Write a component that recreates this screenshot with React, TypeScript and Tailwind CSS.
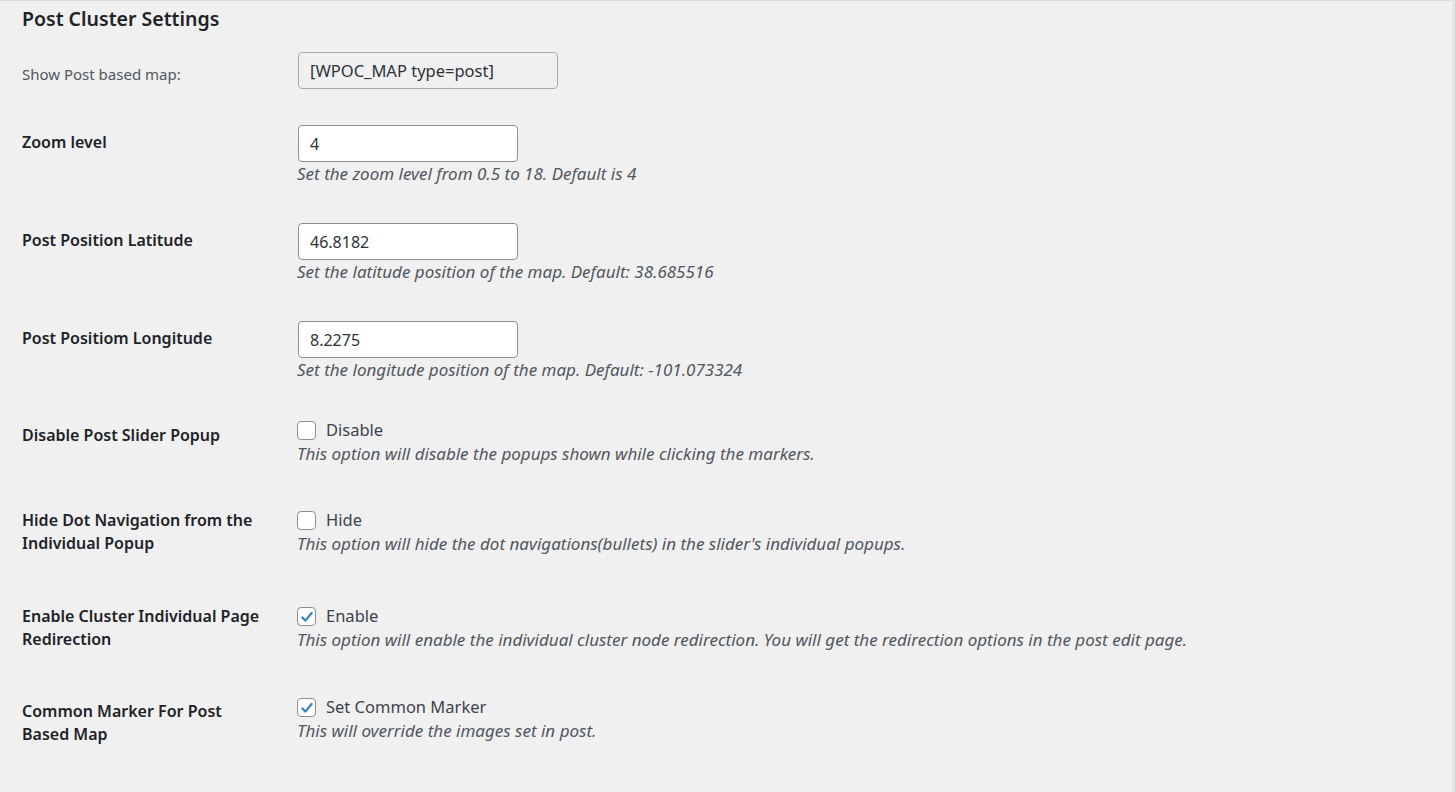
import React, { useState } from "react";

const font = "font-['Noto_Sans',sans-serif]";

interface CheckProps {
  checked: boolean;
  onToggle: () => void;
  label: string;
}

const Check: React.FC<CheckProps> = ({ checked, onToggle, label }) => (
  <label className="flex items-center h-[23px] cursor-pointer">
    <span
      onClick={onToggle}
      className="w-[19px] h-[19px] border border-[#8c8f94] rounded-[4px] bg-white flex items-center justify-center"
    >
      {checked && (
        <svg viewBox="0 0 20 20" className="w-[16px] h-[16px]">
          <path
            d="M4.2 10.6l3.7 3.9L15.8 5"
            fill="none"
            stroke="#3582c4"
            strokeWidth={2.8}
            strokeLinecap="round"
            strokeLinejoin="round"
          />
        </svg>
      )}
    </span>
    <span className="ml-[10px] text-[16.5px] text-[#3c434a]">{label}</span>
  </label>
);

const App: React.FC = () => {
  const [zoom, setZoom] = useState("4");
  const [lat, setLat] = useState("46.8182");
  const [lng, setLng] = useState("8.2275");
  const [disablePopup, setDisablePopup] = useState(false);
  const [hideDots, setHideDots] = useState(false);
  const [redirect, setRedirect] = useState(true);
  const [commonMarker, setCommonMarker] = useState(true);

  const inputCls =
    "w-[220px] h-[37px] px-[11px] bg-white border border-[#8c8f94] rounded-[4px] text-[16px] text-[#2c3338] outline-none";
  const labelCls = "w-[275px] shrink-0 text-[16px] leading-[23px] font-semibold text-[#1d2327]";
  const descCls = "text-[17px] leading-[23px] italic text-[#50575e]";

  return (
    <div className={`min-h-screen bg-[#f0f0f1] border-t border-[#dcdcde] border-r-[3px] border-r-[#e6e6e8] pl-[22px] ${font}`}>
      <h2 className="pt-[4px] h-[51px] text-[19.5px] leading-[28px] font-semibold text-[#1d2327]">
        Post Cluster Settings
      </h2>

      <div className="flex h-[73px]">
        <div className="w-[276px] shrink-0 pt-[11px] text-[15px] leading-[22px] text-[#50575e]">
          Show Post based map:
        </div>
        <input
          readOnly
          value="[WPOC_MAP type=post]"
          className="w-[260px] h-[37px] px-[11px] bg-[#f0f0f1] border border-[#a7aaad] rounded-[4px] text-[16.5px] text-[#2c3338] outline-none"
        />
      </div>

      <div className="flex h-[98px]">
        <div className={`${labelCls} pt-[6px]`}>Zoom level</div>
        <div className="flex flex-col">
          <input value={zoom} onChange={(e) => setZoom(e.target.value)} className={`${inputCls} ml-px`} />
          <p className={descCls}>Set the zoom level from 0.5 to 18. Default is 4</p>
        </div>
      </div>

      <div className="flex h-[98px]">
        <div className={`${labelCls} pt-[6px]`}>Post Position Latitude</div>
        <div className="flex flex-col">
          <input value={lat} onChange={(e) => setLat(e.target.value)} className={`${inputCls} ml-px`} />
          <p className={descCls}>Set the latitude position of the map. Default: 38.685516</p>
        </div>
      </div>

      <div className="flex h-[98px]">
        <div className={`${labelCls} pt-[6px]`}>Post Positiom Longitude</div>
        <div className="flex flex-col">
          <input value={lng} onChange={(e) => setLng(e.target.value)} className={`${inputCls} ml-px`} />
          <p className={descCls}>Set the longitude position of the map. Default: -101.073324</p>
        </div>
      </div>

      <div className="flex h-[90px]">
        <div className={`${labelCls} pt-[5px]`}>Disable Post Slider Popup</div>
        <div className="flex flex-col">
          <Check checked={disablePopup} onToggle={() => setDisablePopup(!disablePopup)} label="Disable" />
          <p className={descCls}>This option will disable the popups shown while clicking the markers.</p>
        </div>
      </div>

      <div className="flex h-[96px]">
        <div className={labelCls}>
          Hide Dot Navigation from the
          <br />
          Individual Popup
        </div>
        <div className="flex flex-col">
          <Check checked={hideDots} onToggle={() => setHideDots(!hideDots)} label="Hide" />
          <p className={descCls}>
            This option will hide the dot navigations(bullets) in the slider's individual popups.
          </p>
        </div>
      </div>

      <div className="flex h-[91px]">
        <div className={labelCls}>
          Enable Cluster Individual Page
          <br />
          Redirection
        </div>
        <div className="flex flex-col">
          <Check checked={redirect} onToggle={() => setRedirect(!redirect)} label="Enable" />
          <p className={descCls}>
            This option will enable the individual cluster node redirection. You will get the redirection
            options in the post edit page.
          </p>
        </div>
      </div>

      <div className="flex">
        <div className={`${labelCls} pt-[4px]`}>
          Common Marker For Post
          <br />
          Based Map
        </div>
        <div className="flex flex-col">
          <Check checked={commonMarker} onToggle={() => setCommonMarker(!commonMarker)} label="Set Common Marker" />
          <p className={descCls}>This will override the images set in post.</p>
        </div>
      </div>
    </div>
  );
};

export default App;
